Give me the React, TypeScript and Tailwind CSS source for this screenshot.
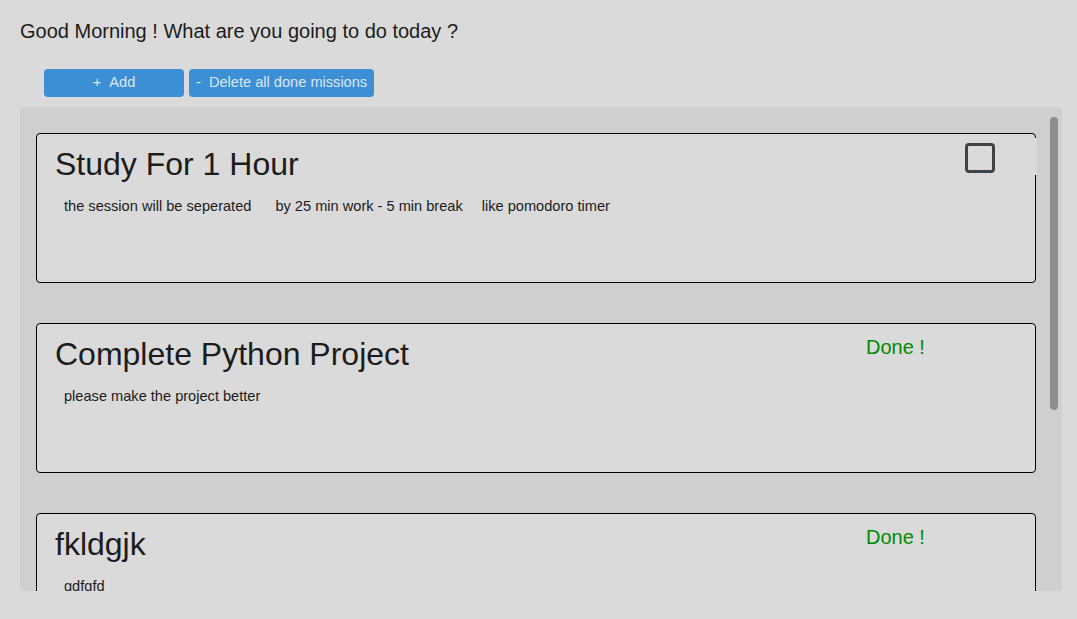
const missions = [
  {
    title: "Study For 1 Hour",
    parts: ["the session will be seperated", "by 25 min work - 5 min break", "like pomodoro timer"],
    done: false,
  },
  { title: "Complete Python Project", parts: ["please make the project better"], done: true },
  { title: "fkldgjk", parts: ["gdfgfd"], done: true },
];

function MissionCard({ m }: { m: (typeof missions)[number] }) {
  return (
    <div className="relative h-[150px] w-[1000px] shrink-0 rounded-[4px] border border-black bg-[#dadada] pl-[18px] pt-[12px]">
      <h2 className="text-[32px] leading-[37px] text-[#1c1c1c]">{m.title}</h2>
      <div className="mt-[15px] flex pl-[9px] text-[14.6px] leading-[16px] text-[#1c1c1c]">
        {m.parts.map((p, i) => (
          <span key={i} className={i === 0 ? "" : i === 1 ? "ml-[24px]" : "ml-[19px]"}>
            {p}
          </span>
        ))}
      </div>
      {m.done ? (
        <span className="absolute left-[829px] top-[12px] text-[20px] leading-[23px] text-[#008a00]">Done !</span>
      ) : (
        <div className="absolute right-[-2px] top-[4px] flex h-[37px] w-[72px] items-start bg-[#dadada] pt-[5px]">
          <div className="h-[30px] w-[30px] rounded-[4px] border-[3px] border-[#3d4349]" />
        </div>
      )}
    </div>
  );
}

export default function App() {
  return (
    <div
      className="h-[619px] w-[1077px] overflow-hidden bg-[#dadada] text-[#1c1c1c]"
      style={{ fontFamily: '"Liberation Sans", Arial, sans-serif' }}
    >
      <h1 className="pl-[20px] pt-[20px] text-[20px] leading-[23px]">Good Morning ! What are you going to do today ?</h1>
      <div className="mt-[26px] flex gap-[5px] pl-[44px]">
        <button className="h-[28px] w-[140px] rounded-[4px] bg-[#3c8fd5] text-[14.6px] text-[#dde7f1]">
          +&nbsp;&nbsp;Add
        </button>
        <button className="h-[28px] rounded-[4px] bg-[#3c8fd5] px-[7px] text-[14.6px] text-[#dde7f1]">
          -&nbsp;&nbsp;Delete all done missions
        </button>
      </div>
      <div className="relative ml-[20px] mt-[10px] h-[484px] w-[1042px] overflow-hidden rounded-[4px] bg-[#cfcfcf]">
        <div className="flex flex-col gap-[40px] pl-[16px] pt-[26px]">
          {missions.map((m, i) => (
            <MissionCard key={i} m={m} />
          ))}
        </div>
        <div className="absolute right-[4px] top-[10px] h-[293px] w-[8px] rounded-full bg-[#8d8d8d]" />
      </div>
    </div>
  );
}
